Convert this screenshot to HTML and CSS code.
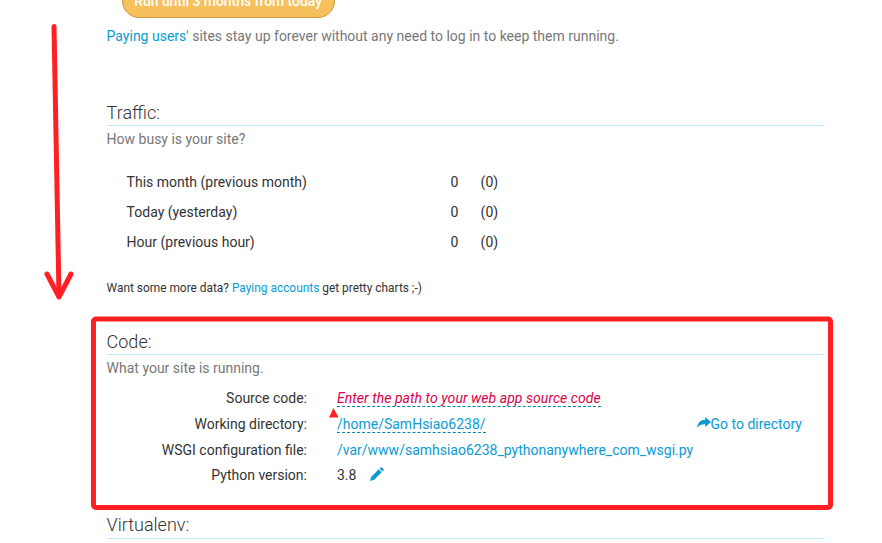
FILE: index.html
```html
<!DOCTYPE html>
<html lang="en">
<head>
<meta charset="utf-8">
<title>Web app configuration</title>
<link rel="stylesheet" href="styles.css">
</head>
<body>
<main class="page">
  <div class="button-row"><button class="extend">Run until 3 months from today</button></div>
  <p class="note expiry"><a>Paying users</a>' sites stay up forever without any need to log in to keep them running.</p>

  <section class="traffic">
    <h2>Traffic:</h2>
    <p class="note">How busy is your site?</p>
    <div class="stats">
      <span>This month (previous month)</span><span>0</span><span>(0)</span>
      <span>Today (yesterday)</span><span>0</span><span>(0)</span>
      <span>Hour (previous hour)</span><span>0</span><span>(0)</span>
    </div>
    <p class="small">Want some more data? <a>Paying accounts</a> get pretty charts ;-)</p>
  </section>

  <section class="code">
    <h2>Code:</h2>
    <p class="note">What your site is running.</p>
    <div class="settings">
      <div class="row"><span class="label">Source code:</span><a class="editable empty">Enter the path to your web app source code</a></div>
      <div class="row"><span class="label">Working directory:</span><a class="editable">/home/SamHsiao6238/</a>
        <a class="goto"><svg width="14" height="12" viewBox="0 0 14 12"><path d="M8.200 0 14 5 8.200 10V7.200C4.600 7.100 2.200 7.800 .1 11 .4 6 3.500 2.700 8.200 2.700z"/></svg>Go to directory</a></div>
      <div class="row"><span class="label">WSGI configuration file:</span><a class="wsgi">/var/www/samhsiao6238_pythonanywhere_com_wsgi.py</a></div>
      <div class="row last"><span class="label">Python version:</span><span>3.8</span><svg class="pencil" width="14" height="14" viewBox="0 0 14 14"><path d="M0 14 1.300 9.800 8.800 2.300 11.700 5.200 4.200 12.700zM9.600 1.500 10.700.5Q11.300 0 11.900.5L13.500 2.100Q14 2.700 13.500 3.300L12.500 4.400z"/></svg></div>
    </div>
  </section>

  <section class="virtualenv">
    <h2>Virtualenv:</h2>
  </section>
</main>
<svg class="annotations" width="882" height="543" viewBox="0 0 882 543">
  <path class="stroke shaft" d="M54 26.500 59 296"/>
  <path class="stroke head" d="M47 274 59 297 71 274"/>
  <rect class="stroke frame" x="93.500" y="319" width="737" height="188.500" rx="2.500"/>
  <path class="marker" d="M333.500 408 338.500 417.500H329z"/>
</svg>
</body>
</html>
```
FILE: styles.css
```css
* { box-sizing: border-box; }
html, body { margin: 0; height: 543px; overflow: hidden; background: #fff; }
body { position: relative; font: 14px/20px Roboto, sans-serif; color: #333; }
h2, p { margin: 0; }
a { color: #0a9bd3; }
.page { width: 718.4px; margin-left: 106.6px; }
.button-row { height: 18px; display: flex; align-items: flex-end; padding-left: 15px; }
.extend {
  flex: none; width: 213px; height: 34px; padding: 0 0 1px;
  border: 1px solid #d09a3c; border-radius: 17px;
  background: #f6c15c; color: #fff; font: 500 13.9px/20px Roboto, sans-serif;
}
.note { color: #777; }
.expiry { padding-top: 8px; height: 82px; }
h2 {
  height: 26px; padding-top: 1px; border-bottom: 1px solid #bde9fb;
  font-size: 18px; font-weight: 300; line-height: 24px;
}
h2 + .note { margin-top: 3px; }
.traffic { height: 229px; }
.stats {
  display: grid; grid-template-columns: 324px 30px 40px;
  grid-auto-rows: 30px; line-height: 30px; margin: 18px 0 21px 20px;
}
.small { font-size: 11.9px; }
.code { height: 184px; }
.virtualenv h2 { padding-top: 0; }
.settings { padding-top: 10px; }
.row { display: flex; height: 26px; align-items: flex-start; }
.row.last { margin-top: -1px; }
.label { width: 200.4px; margin-right: 30px; text-align: right; }
.editable { height: 19px; border-bottom: 1px dashed #0a80b5; }
.empty { color: #d9004c; font-style: italic; letter-spacing: .05px; }
.goto { margin-left: auto; margin-right: 23px; display: flex; }
.goto svg { margin-top: 3px; }
svg { fill: #0a9bd3; }
.pencil { margin: 2px 0 0 14px; }
.annotations { position: absolute; left: 0; top: 0; pointer-events: none; }
.stroke { fill: none; stroke: #ff2023; stroke-width: 5; stroke-linecap: round; stroke-linejoin: round; }
.marker { fill: #ff2023; }
```
